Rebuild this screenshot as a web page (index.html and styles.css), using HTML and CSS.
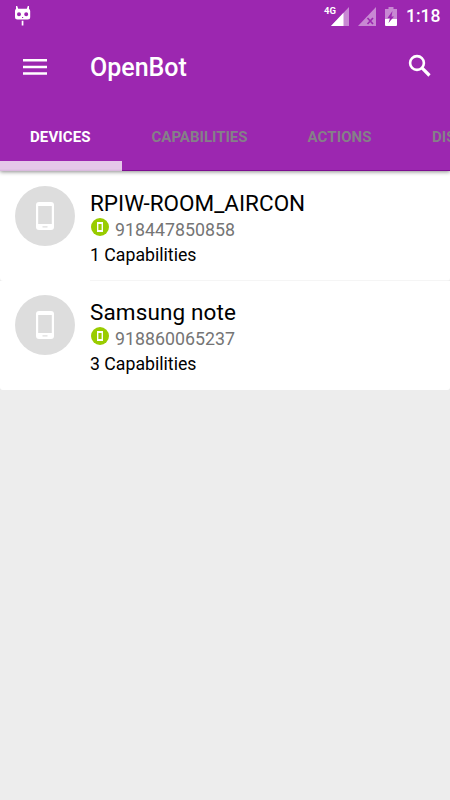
FILE: index.html
```
<!DOCTYPE html>
<html lang="en">
<head>
<meta charset="utf-8">
<title>OpenBot</title>
<link rel="stylesheet" href="styles.css">
</head>
<body>
<header class="header">
  <div class="status">
    <svg class="droid" width="16" height="20" viewBox="0 0 16 20"><path fill="#fff" fill-rule="evenodd" d="M1 0h1.200l1 2.800h8.600l1-2.800H14v3q1.200.600 1.200 2v6q0 2.500-2.500 2.500H2.500Q0 13.500 0 11V5q0-1.400 1-2zM4 6.300a2 2 0 1 0 0 4 2 2 0 0 0 0-4zm7.200 0a2 2 0 1 0 0 4 2 2 0 0 0 0-4zM7 11h1.200v1H7zM6.700 14.800h1.700v4.700H6.700z"/></svg>
    <div class="indicators">
      <span class="network">4G</span>
      <svg class="signal" width="18" height="19" viewBox="0 0 18 19"><path fill="#fff" fill-opacity=".45" d="M0 19 18 0v19z"/><path fill="#fff" d="M0 19 12.500 5.800V19z"/></svg>
      <svg class="nosignal" width="18" height="19" viewBox="0 0 18 19"><path fill="#fff" fill-opacity=".45" d="M0 19 18 0v19z"/><path stroke="#9c27b0" stroke-width="1.700" d="m9.500 11 5.500 6m0-6-5.500 6"/></svg>
      <svg class="battery" width="12" height="19" viewBox="0 0 12 19"><path fill="#fff" fill-opacity=".45" d="M3.500 0h5v2H12v10H0V2h3.500z"/><path fill="#fff" d="M0 12h12v6q0 1-1 1H1q-1 0-1-1z"/><path fill="#9c27b0" d="M7.500 4 2.500 11H5l-1.500 5L9 9.500H6.500z"/></svg>
      <span class="clock">1:18</span>
    </div>
  </div>
  <div class="toolbar">
    <svg class="menu" width="24" height="17" viewBox="0 0 24 17"><path fill="#fff" d="M0 0h24v2.500H0zM0 6.700h24v2.500H0zM0 13.300h24v2.500H0z"/></svg>
    <h1 class="title">OpenBot</h1>
    <svg class="search" width="24" height="24" viewBox="0 0 24 24" fill="none" stroke="#fff"><circle cx="9" cy="9" r="6.900" stroke-width="2.600"/><path stroke-width="3.200" d="m13.700 13.700 7.800 7.800"/></svg>
  </div>
  <nav class="tabs">
    <span class="tab active"><span class="label devices">DEVICES</span></span>
    <span class="tab"><span class="label caps">CAPABILITIES</span></span>
    <span class="tab"><span class="label actions">ACTIONS</span></span>
    <span class="tab"><span class="label">DISCOVER</span></span>
  </nav>
</header>
<main class="list">
  <article class="row first">
    <div class="avatar"><svg width="18" height="28" viewBox="0 0 18 28"><path fill="#fff" fill-rule="evenodd" d="M3 0h12q3 0 3 3v22q0 3-3 3H3q-3 0-3-3V3q0-3 3-3zM2.200 4v18h13.600V4zM6.500 24.200v1.300h5v-1.300z"/></svg></div>
    <div class="info">
      <div class="name">RPIW-ROOM_AIRCON</div>
      <div class="phone"><svg width="18" height="18" viewBox="0 0 18 18"><circle cx="9" cy="9" r="9" fill="#99cc00"/><path fill="#fff" fill-rule="evenodd" d="M6 4h6v10H6zm1.400 2v6h3.200V6z"/></svg><span class="number">918447850858</span></div>
      <div class="count">1 Capabilities</div>
    </div>
  </article>
  <article class="row second">
    <div class="avatar"><svg width="18" height="28" viewBox="0 0 18 28"><path fill="#fff" fill-rule="evenodd" d="M3 0h12q3 0 3 3v22q0 3-3 3H3q-3 0-3-3V3q0-3 3-3zM2.200 4v18h13.600V4zM6.500 24.200v1.300h5v-1.300z"/></svg></div>
    <div class="info">
      <div class="name note">Samsung note</div>
      <div class="phone"><svg width="18" height="18" viewBox="0 0 18 18"><circle cx="9" cy="9" r="9" fill="#99cc00"/><path fill="#fff" fill-rule="evenodd" d="M6 4h6v10H6zm1.400 2v6h3.200V6z"/></svg><span class="number">918860065237</span></div>
      <div class="count">3 Capabilities</div>
    </div>
  </article>
</main>
</body>
</html>
```
FILE: styles.css
```
* { box-sizing: border-box; }
body {
  margin: 0;
  height: 800px;
  overflow: hidden;
  background: #ededed;
  font-family: Roboto, sans-serif;
  color: #000;
}
svg { display: block; flex: none; }
.header {
  position: relative;
  height: 171px;
  background: #9c27b0;
  border-bottom: 1px solid #7d0e91;
  box-shadow: 0 1px 4px rgba(0, 0, 0, .45);
  color: #fff;
}
.status {
  display: flex;
  justify-content: space-between;
  height: 32px;
  padding: 6px 10px 0 15px;
}
.indicators { display: flex; height: 20px; }
.network { font-size: 9.500px; font-weight: 700; line-height: 10px; width: 6px; }
.signal { margin: 1px 0 0 1px; }
.nosignal { margin: 1px 0 0 9px; }
.battery { margin: 1px 0 0 9px; }
.clock { margin-left: 9px; width: 34px; font-size: 17.500px; font-weight: 500; line-height: 21px; }
.toolbar {
  display: flex;
  align-items: center;
  height: 72px;
  padding: 0 18px 0 23px;
}
.menu { margin-top: -2px; }
.title { margin: 0 auto 0 43px; font-size: 25px; font-weight: 500; line-height: 30px; }
.search { margin-top: -5px; }
.tabs { display: flex; height: 67px; overflow: hidden; }
.tab {
  flex: none;
  padding: 22px 30px 0;
  height: 67px;
  font-size: 15px;
  font-weight: 700;
  line-height: 22px;
  color: #858088;
}
.label { display: block; white-space: nowrap; }
.devices { width: 61.500px; letter-spacing: .1px; }
.caps { width: 96px; }
.actions { width: 64.500px; letter-spacing: .1px; }
.active {
  color: #fff;
  background: linear-gradient(#e5c8e9 80%, #d5b4da) 0 100% / 100% 10px no-repeat;
}
.row {
  display: flex;
  height: 110px;
  padding: 15px 15px 0;
  background: #fff;
  border-radius: 0 0 3px 3px;
}
.first {
  background: linear-gradient(#f5f5f5, #f5f5f5) 90px 100% / 100% 1px no-repeat #fff;
}
.second { height: 109px; padding-top: 14px; }
.avatar {
  display: flex;
  align-items: center;
  justify-content: center;
  width: 60px;
  height: 60px;
  border-radius: 50%;
  background: #ddd;
}
.info { margin: 1px 0 0 15px; }
.name { font-size: 22.500px; line-height: 32px; white-space: nowrap; }
.note { letter-spacing: .12px; }
.phone { display: flex; align-items: center; height: 20px; padding-left: 1px; }
.phone svg { margin-top: -4px; }
.number { margin: 2px 0 0 6px; font-size: 17.800px; line-height: 22px; color: #757575; }
.count { margin-top: 3px; font-size: 17.700px; line-height: 26px; }
```
